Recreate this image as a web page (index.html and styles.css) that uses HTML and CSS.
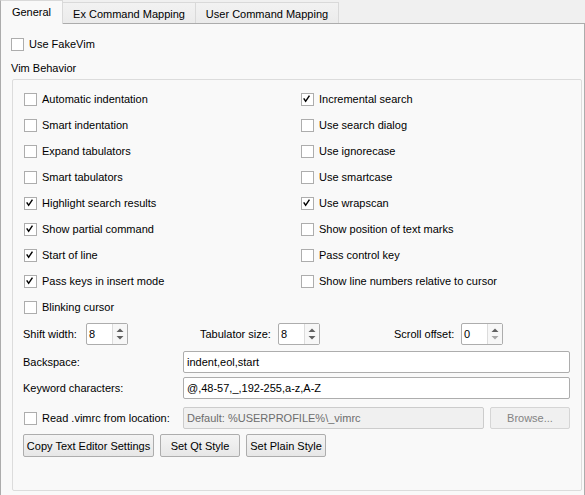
FILE: index.html
```html
<!DOCTYPE html>
<html>
<head>
<meta charset="utf-8">
<link rel="stylesheet" href="styles.css">
</head>
<body>
<div class="tabbar">
  <div class="tab tab-active">General</div>
  <div class="tab tab-ex">Ex Command Mapping</div>
  <div class="tab tab-user">User Command Mapping</div>
</div>
<div class="pane">
  <label class="check-row top-check"><span class="cb"></span><span>Use FakeVim</span></label>
  <div class="group-title">Vim Behavior</div>
  <div class="group">
    <div class="cols">
      <div class="col col-left">
        <label class="check-row"><span class="cb"></span><span>Automatic indentation</span></label>
        <label class="check-row"><span class="cb"></span><span>Smart indentation</span></label>
        <label class="check-row"><span class="cb"></span><span>Expand tabulators</span></label>
        <label class="check-row"><span class="cb"></span><span>Smart tabulators</span></label>
        <label class="check-row"><span class="cb on"><svg viewBox="0 0 13 13"><path d="M3 6.2 L5.3 9.6 L9.8 2.8"/></svg></span><span>Highlight search results</span></label>
        <label class="check-row"><span class="cb on"><svg viewBox="0 0 13 13"><path d="M3 6.2 L5.3 9.6 L9.8 2.8"/></svg></span><span>Show partial command</span></label>
        <label class="check-row"><span class="cb on"><svg viewBox="0 0 13 13"><path d="M3 6.2 L5.3 9.6 L9.8 2.8"/></svg></span><span>Start of line</span></label>
        <label class="check-row"><span class="cb on"><svg viewBox="0 0 13 13"><path d="M3 6.2 L5.3 9.6 L9.8 2.8"/></svg></span><span>Pass keys in insert mode</span></label>
        <label class="check-row"><span class="cb"></span><span>Blinking cursor</span></label>
      </div>
      <div class="col">
        <label class="check-row"><span class="cb on"><svg viewBox="0 0 13 13"><path d="M3 6.2 L5.3 9.6 L9.8 2.8"/></svg></span><span>Incremental search</span></label>
        <label class="check-row"><span class="cb"></span><span>Use search dialog</span></label>
        <label class="check-row"><span class="cb"></span><span>Use ignorecase</span></label>
        <label class="check-row"><span class="cb"></span><span>Use smartcase</span></label>
        <label class="check-row"><span class="cb on"><svg viewBox="0 0 13 13"><path d="M3 6.2 L5.3 9.6 L9.8 2.8"/></svg></span><span>Use wrapscan</span></label>
        <label class="check-row"><span class="cb"></span><span>Show position of text marks</span></label>
        <label class="check-row"><span class="cb"></span><span>Pass control key</span></label>
        <label class="check-row"><span class="cb"></span><span>Show line numbers relative to cursor</span></label>
      </div>
    </div>

    <div class="spin-row">
      <div class="spin-group sg1"><span class="spin-label">Shift width:</span><div class="spin"><span class="spin-val">8</span><span class="spin-btns"><svg viewBox="0 0 14 20"><path d="M3.5 8 L7 4.5 L10.5 8 Z"/><path d="M3.5 12 L7 15.5 L10.5 12 Z"/></svg></span></div></div>
      <div class="spin-group sg2"><span class="spin-label">Tabulator size:</span><div class="spin"><span class="spin-val">8</span><span class="spin-btns"><svg viewBox="0 0 14 20"><path d="M3.5 8 L7 4.5 L10.5 8 Z"/><path d="M3.5 12 L7 15.5 L10.5 12 Z"/></svg></span></div></div>
      <div class="spin-group sg3"><span class="spin-label">Scroll offset:</span><div class="spin"><span class="spin-val">0</span><span class="spin-btns"><svg viewBox="0 0 14 20"><path d="M3.5 8 L7 4.5 L10.5 8 Z"/><path class="dim" d="M3.5 12 L7 15.5 L10.5 12 Z"/></svg></span></div></div>
    </div>

    <div class="field-row r-back"><span class="field-label">Backspace:</span><div class="edit">indent,eol,start</div></div>
    <div class="field-row r-key"><span class="field-label">Keyword characters:</span><div class="edit">@,48-57,_,192-255,a-z,A-Z</div></div>
    <div class="field-row r-read">
      <label class="check-row read-check"><span class="cb"></span><span>Read .vimrc from location:</span></label>
      <div class="edit edit-disabled">Default: %USERPROFILE%\_vimrc</div>
      <div class="btn btn-disabled browse">Browse...</div>
    </div>
    <div class="btn-row">
      <div class="btn b-copy">Copy Text Editor Settings</div>
      <div class="btn b-std">Set Qt Style</div>
      <div class="btn b-std">Set Plain Style</div>
    </div>
  </div>
</div>
</body>
</html>
```

FILE: styles.css
```css
html, body {
  margin: 0;
  padding: 0;
}
body {
  width: 585px;
  height: 495px;
  overflow: hidden;
  background: #f0f0f0;
  font-family: "Liberation Sans", Arial, sans-serif;
  font-size: 11px;
  color: #000;
}

/* Tabs */
.tabbar {
  display: flex;
  align-items: flex-end;
  height: 23px;
  border-bottom: 1px solid #acacac;
}
.tab {
  box-sizing: border-box;
  display: flex;
  align-items: center;
  justify-content: center;
  height: 21px;
  border-top: 1px solid #d9d9d9;
  border-right: 1px solid #d9d9d9;
  background: linear-gradient(#f2f2f2, #ebebeb);
  padding-top: 1px;
}
.tab-active {
  width: 63px;
  height: 24px;
  margin-bottom: -1px;
  background: #f9f9f9;
  border-left: 1px solid #acacac;
  border-top: 1px solid #d9d9d9;
  padding-top: 0;
  padding-bottom: 1px;
}
.tab-ex { width: 133px; }
.tab-user { width: 143px; }

/* Pane */
.pane {
  box-sizing: border-box;
  width: 585px;
  height: 471px;
  background: #f9f9f9;
  border-left: 1px solid #acacac;
  border-right: 1px solid #acacac;
  padding: 0 2px 0 10px;
  display: flex;
  flex-direction: column;
}

.check-row {
  display: flex;
  align-items: center;
  gap: 5px;
  height: 26px;
  white-space: nowrap;
}
.top-check {
  margin-top: 10px;
  height: 20px;
}
.cb {
  box-sizing: border-box;
  width: 13px;
  height: 13px;
  flex: none;
  border: 1px solid #adadad;
  background: #fff;
  display: flex;
}
.cb svg {
  width: 11px;
  height: 11px;
  margin: 0;
}
.cb svg path {
  fill: none;
  stroke: #000;
  stroke-width: 1.7;
  transform: translate(-1px, -1px);
}

.group-title {
  margin-top: 7px;
  height: 14px;
  line-height: 14px;
}

.group {
  box-sizing: border-box;
  margin-top: 4px;
  margin-left: 1px;
  height: 412px;
  border: 1px solid #dcdcdc;
  border-radius: 2px;
  padding: 6px 10px 0 10px;
  display: flex;
  flex-direction: column;
}
.cols {
  display: flex;
  padding-left: 1px;
}
.col {
  display: flex;
  flex-direction: column;
}
.col-left { width: 277px; }

/* spin boxes */
.spin-row {
  display: flex;
  margin-top: 3px;
  height: 22px;
  align-items: center;
}
.spin-group {
  display: flex;
  align-items: center;
}
.sg1 { width: 177px; }
.sg1 .spin-label { width: 63px; }
.sg2 { width: 194px; }
.sg2 .spin-label { width: 78px; }
.sg3 .spin-label { width: 67px; }
.spin {
  box-sizing: border-box;
  width: 42px;
  height: 22px;
  border: 1px solid #adadad;
  border-radius: 2px;
  background: #fff;
  display: flex;
}
.spin-val {
  flex: 1;
  padding-left: 2px;
  line-height: 20px;
}
.spin-btns {
  width: 14px;
  border-left: 1px solid #dcdcdc;
  background: #f7f7f7;
  display: flex;
}
.spin-btns svg {
  width: 14px;
  height: 20px;
}
.spin-btns path { fill: #606060; }
.spin-btns path.dim { fill: #a8a8a8; }

/* fields */
.field-row {
  display: flex;
  align-items: center;
  height: 22px;
}
.r-back { margin-top: 6px; }
.r-key { margin-top: 4px; }
.r-read { margin-top: 8px; }
.field-label {
  width: 160px;
  flex: none;
}
.read-check {
  width: 159px;
  margin-left: 1px;
  flex: none;
  height: 22px;
}
.edit {
  box-sizing: border-box;
  width: 387px;
  height: 22px;
  border: 1px solid #adadad;
  border-radius: 2px;
  background: #fff;
  line-height: 20px;
  padding-left: 3px;
  white-space: nowrap;
}
.edit-disabled {
  width: 301px;
  background: #f0f0f0;
  border-color: #cccccc;
  color: #6d6d6d;
}

.btn {
  box-sizing: border-box;
  height: 23px;
  border: 1px solid #adadad;
  border-radius: 2px;
  background: linear-gradient(#f4f4f4, #e7e7e7);
  display: flex;
  align-items: center;
  justify-content: center;
  white-space: nowrap;
}
.browse {
  width: 80px;
  height: 22px;
  margin-left: 6px;
}
.btn-disabled {
  color: #838383;
  border-color: #d5d5d5;
  background: #f0f0f0;
}
.btn-row {
  display: flex;
  gap: 6px;
  margin-top: 5px;
}
.b-copy { width: 131px; }
.b-std { width: 80px; }
```
